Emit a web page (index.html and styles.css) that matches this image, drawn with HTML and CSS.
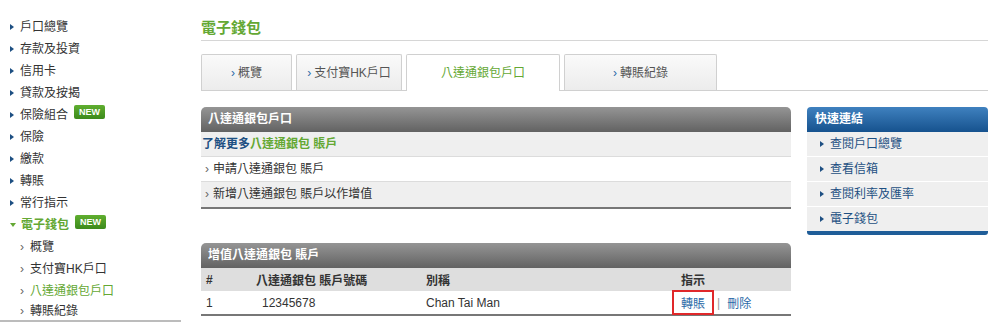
FILE: index.html
```html
<!DOCTYPE html>
<html>
<head>
  <title>電子錢包</title>
  <link rel="stylesheet" href="styles.css">
</head>
<body>
  <div class="page">
    <nav class="sidebar">
      <ul class="menu">
        <li class="item">戶口總覽</li>
        <li class="item">存款及投資</li>
        <li class="item">信用卡</li>
        <li class="item">貸款及按揭</li>
        <li class="item">保險組合 <span class="badge">NEW</span></li>
        <li class="item">保險</li>
        <li class="item">繳款</li>
        <li class="item">轉賬</li>
        <li class="item">常行指示</li>
        <li class="item open">電子錢包 <span class="badge">NEW</span></li>
        <li class="sub">概覽</li>
        <li class="sub">支付寶HK戶口</li>
        <li class="sub current">八達通銀包戶口</li>
        <li class="sub">轉賬紀錄</li>
      </ul>
    </nav>

    <main class="content">
      <h1 class="title">電子錢包</h1>

      <div class="tabs">
        <div class="tab t1"><span class="chev">›</span>概覽</div>
        <div class="tab t2"><span class="chev">›</span>支付寶HK戶口</div>
        <div class="tab t3 active">八達通銀包戶口</div>
        <div class="tab t4"><span class="chev">›</span>轉賬紀錄</div>
      </div>

      <div class="columns">
        <div class="main-col">
          <section class="panel">
            <div class="panel-head">八達通銀包戶口</div>
            <div class="row grey intro"><span class="blue">了解更多</span><span class="green">八達通銀包 賬戶</span></div>
            <div class="row link"><span class="chev">›</span>申請八達通銀包 賬戶</div>
            <div class="row grey link"><span class="chev">›</span>新增八達通銀包 賬戶以作增值</div>
          </section>

          <section class="panel second">
            <div class="panel-head">增值八達通銀包 賬戶</div>
            <div class="trow thead">
              <span class="c-num">#</span>
              <span class="c-acc">八達通銀包 賬戶號碼</span>
              <span class="c-name">別稱</span>
              <span class="c-act">指示</span>
            </div>
            <div class="trow tbody">
              <span class="c-num">1</span>
              <span class="c-acc val">12345678</span>
              <span class="c-name">Chan Tai Man</span>
              <span class="c-act"><a class="act boxed">轉賬</a><span class="sep">|</span><a class="act">刪除</a></span>
            </div>
          </section>
        </div>

        <aside class="quick">
          <div class="quick-head">快速連結</div>
          <div class="qrow">查閱戶口總覽</div>
          <div class="qrow">查看信箱</div>
          <div class="qrow">查閱利率及匯率</div>
          <div class="qrow">電子錢包</div>
          <div class="quick-foot"></div>
        </aside>
      </div>
    </main>
  </div>
</body>
</html>
```

FILE: styles.css
```css
:root {
  --green: #64a834;
  --navy: #1d4f82;
  --text: #333333;
  --row-grey: #efefef;
}

* {
  margin: 0;
  padding: 0;
  box-sizing: border-box;
}

body {
  font-family: "Liberation Sans", "Noto Sans CJK TC", sans-serif;
  font-size: 12px;
  color: var(--text);
  background: #ffffff;
  overflow: hidden;
}

.page {
  display: flex;
  width: 1000px;
}

/* sidebar */
.sidebar {
  width: 201px;
  padding-top: 16px;
}

.menu {
  list-style: none;
  width: 181px;
  border-bottom: 2px solid #bcbcbc;
}

.item,
.sub {
  height: 22px;
  line-height: 22px;
  display: flex;
  align-items: center;
  white-space: nowrap;
}

.item {
  padding-left: 10px;
}

.item::before {
  content: "";
  width: 0;
  height: 0;
  border-left: 4px solid var(--navy);
  border-top: 3px solid transparent;
  border-bottom: 3px solid transparent;
  margin-right: 6px;
}

.item.open {
  color: var(--green);
  font-weight: bold;
}

.item.open::before {
  border-left: 3px solid transparent;
  border-right: 3px solid transparent;
  border-top: 4px solid var(--green);
  border-bottom: 0;
  margin-right: 5px;
}

.sub {
  padding-left: 20px;
}

.sub::before {
  content: "›";
  color: #666;
  margin-right: 6px;
  font-size: 12px;
}

.sub.current {
  color: var(--green);
}

.sub:last-child {
  height: 18px;
  line-height: 18px;
}

.badge {
  display: inline-block;
  margin-left: 6px;
  height: 14px;
  line-height: 14px;
  padding: 0 5px;
  font-size: 9px;
  font-weight: bold;
  color: #fff;
  border-radius: 2px;
  background: linear-gradient(#5fae2f, #3c8a1c);
  position: relative;
  top: -3px;
}

/* content */
.content {
  width: 787px;
  padding-top: 17px;
}

.title {
  font-size: 15px;
  color: var(--green);
  font-weight: bold;
  height: 24px;
  line-height: 21px;
  border-bottom: 1px solid #d6d6d6;
}

.tabs {
  display: flex;
  gap: 4px;
  margin-top: 13px;
  border-bottom: 1px solid #d0d0d0;
  height: 37px;
}

.tab {
  height: 36px;
  line-height: 36px;
  text-align: center;
  color: #555;
  font-size: 12px;
  border: 1px solid #d0d0d0;
  border-bottom: 0;
  border-radius: 2px 2px 0 0;
  background: linear-gradient(#fafafa, #ececec);
}

.tab .chev {
  color: #2b6aa8;
  margin-right: 3px;
}

.t1 { width: 91px; }
.t2 { width: 106px; }
.t3 { width: 154px; }
.t4 { width: 153px; }

.tab.active {
  background: #fff;
  color: var(--green);
  height: 37px;
}

.columns {
  display: flex;
  gap: 16px;
  margin-top: 16px;
}

.main-col {
  width: 590px;
}

.panel {
  border-bottom: 2px solid #777;
}

.panel.second {
  margin-top: 34px;
}

.panel-head {
  height: 25px;
  line-height: 25px;
  padding-left: 7px;
  color: #fff;
  font-weight: bold;
  border-radius: 5px 5px 0 0;
  background: linear-gradient(#959595, #626262);
}

.row {
  height: 25px;
  line-height: 24px;
  border-bottom: 1px solid #dcdcdc;
  background: #fff;
}

.row.grey {
  background: var(--row-grey);
}

.row:last-child {
  border-bottom: 0;
}

.intro {
  padding-left: 1px;
}

.blue {
  color: var(--navy);
  font-weight: bold;
}

.green {
  color: var(--green);
  font-weight: bold;
}

.link {
  padding-left: 4px;
}

.link .chev {
  color: #666;
  margin-right: 4px;
}

.trow {
  display: flex;
  align-items: center;
  height: 23px;
}

.thead {
  background: #dedede;
  font-weight: bold;
}

.tbody {
  background: #fff;
}

.c-num { width: 55px; padding-left: 5px; }
.c-acc { width: 170px; }
.c-acc.val { padding-left: 6px; }
.c-name { width: 255px; }
.c-act { display: flex; align-items: center; }

.act {
  color: #2b6aa8;
}

.boxed {
  border: 2px solid #e0282a;
  padding: 2px 7px;
  margin-left: -9px;
}

.sep {
  color: #999;
  margin: 0 7px 0 3px;
}

/* quick links */
.quick {
  width: 181px;
}

.quick-head {
  height: 25px;
  line-height: 25px;
  padding-left: 8px;
  color: #fff;
  font-weight: bold;
  border-radius: 4px 4px 0 0;
  background: linear-gradient(#3f81bf, #16528e);
}

.qrow {
  height: 25px;
  line-height: 24px;
  padding-left: 13px;
  color: var(--navy);
  background: var(--row-grey);
  border-bottom: 1px solid #fff;
  display: flex;
  align-items: center;
}

.qrow::before {
  content: "";
  width: 0;
  height: 0;
  border-left: 4px solid var(--navy);
  border-top: 3px solid transparent;
  border-bottom: 3px solid transparent;
  margin-right: 6px;
}

.quick-foot {
  height: 4px;
  margin-top: -1px;
  background: #1f5d98;
  border-radius: 0 0 3px 3px;
}
```
